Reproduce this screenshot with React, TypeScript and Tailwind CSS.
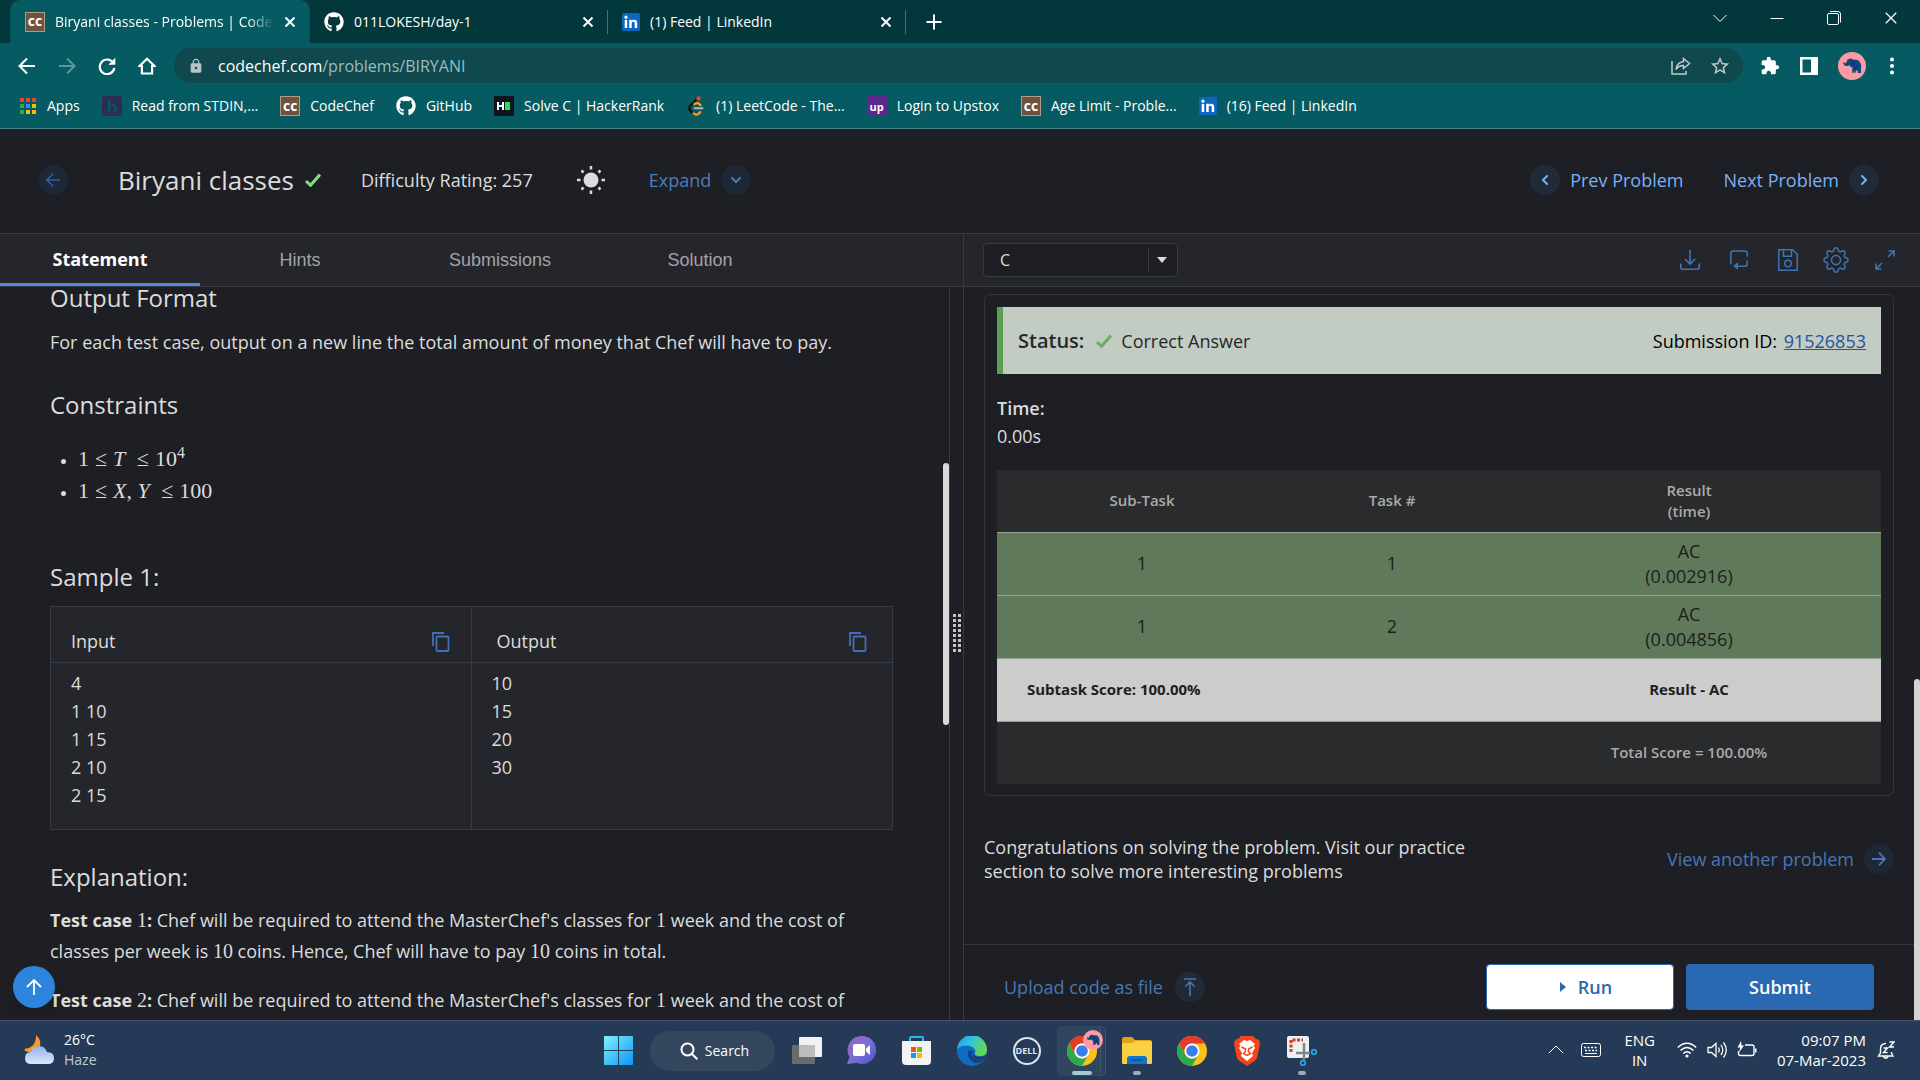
import type { ReactNode } from "react";
import { FaGithub } from "react-icons/fa";
import { MdExtension, MdLock, MdStarBorder } from "react-icons/md";

/* ---------- small drawings ---------- */

function CodeChefIcon() {
  return (
    <span className="flex size-5 shrink-0 items-center justify-center border border-[#b09a88] bg-[#6f533f] font-['Open_Sans',sans-serif] text-[11px] leading-none font-extrabold text-white">
      CC
    </span>
  );
}

function LinkedInIcon() {
  return (
    <svg viewBox="0 0 20 20" className="size-[18px] shrink-0" aria-hidden="true">
      <rect width="20" height="20" rx="2" fill="#0a66c2" />
      <rect x="3" y="7.6" width="2.8" height="9" fill="#fff" />
      <circle cx="4.4" cy="4.6" r="1.7" fill="#fff" />
      <path d="M8 7.6h2.7v1.3c.5-.9 1.5-1.5 2.8-1.5 2.7 0 3.4 1.6 3.4 4.1v5.1h-2.8v-4.6c0-1.2-.1-2.3-1.5-2.3s-1.8 1-1.8 2.2v4.7H8z" fill="#fff" />
    </svg>
  );
}

function AppsIcon() {
  const colors = ["#ea4335", "#ea4335", "#ea4335", "#34a853", "#4285f4", "#fbbc04", "#34a853", "#fbbc04", "#fbbc04"];
  return (
    <svg viewBox="0 0 18 18" className="size-[18px] shrink-0" aria-hidden="true">
      {colors.map((c, i) => (
        <rect key={i} x={1 + (i % 3) * 6} y={1 + Math.floor(i / 3) * 6} width="4" height="4" fill={c} />
      ))}
    </svg>
  );
}

function HIcon() {
  return (
    <svg viewBox="0 0 20 20" className="size-5 shrink-0" aria-hidden="true">
      <rect width="20" height="20" rx="2" fill="#2b2d55" />
      <path d="M7 3v13M7 10q1-2 3.200-2t3.100 2.600V16" fill="none" stroke="#06595f" strokeWidth="2.200" />
    </svg>
  );
}

function HackerIcon() {
  return (
    <svg viewBox="0 0 20 20" className="size-5 shrink-0" aria-hidden="true">
      <rect width="20" height="20" fill="#0b141f" />
      <path d="M4 6v8M9 6v8M4 10h5" stroke="#fff" strokeWidth="2" />
      <rect x="11" y="6" width="5" height="8" fill="#1ee35b" />
    </svg>
  );
}

function LeetIcon() {
  return (
    <svg viewBox="0 0 20 20" className="size-5 shrink-0" fill="none" strokeLinecap="round" aria-hidden="true">
      <path d="M11 3 4.500 9.500q-2.500 2.500 0 5.500l3 3" stroke="#101010" strokeWidth="2.200" />
      <path d="m7.500 17.500q2.500 2 5 .3l1.800-1.700M8.500 8.200q2.500-2 4.500-.5l1.500 1.500" stroke="#ffa116" strokeWidth="2.200" />
      <path d="M8.500 12.300h8" stroke="#b3b3b3" strokeWidth="2" />
      <circle cx="12.500" cy="2.500" r="2.200" fill="#d14a4a" />
    </svg>
  );
}

function UpstoxIcon() {
  return (
    <span className="flex size-5 shrink-0 items-center justify-center bg-[#5a298b] font-['Open_Sans',sans-serif] text-[11px] leading-none font-bold text-white">
      up
    </span>
  );
}

function Avatar({ className }: { className: string }) {
  return (
    <svg viewBox="0 0 28 28" className={className} aria-hidden="true">
      <circle cx="14" cy="14" r="14" fill="#fb9ba6" />
      <path d="M5.200 10.500q.5 4 4.300 3.500 1.300-.3 1.800-1 1 2.500 3.200 2.500l-.5 5.500h3.500l.5-2.500h1.500l.5 2.500h3v-3.500q.8-5-1.500-8-1.500-2-4.500-2l-2 .2q-1.500-1.500-3.500-1-2.500.4-3 3-1 2.800-2.300.6z" fill="#12457f" />
      <path d="M13.500 9q2.500 1 2 4M19 15l-3 2" fill="none" stroke="#0b2446" />
      <circle cx="16" cy="20.500" r="1" fill="#d98a2b" />
    </svg>
  );
}

function Cross({ className }: { className: string }) {
  return (
    <svg viewBox="0 0 12 12" className={className} fill="none" stroke="currentColor" aria-hidden="true">
      <path d="m1.500 1.500 9 9m0-9-9 9" />
    </svg>
  );
}

function Check({ className }: { className: string }) {
  return (
    <svg viewBox="0 0 16 14" className={`h-3.5 w-4 shrink-0 ${className}`} fill="none" stroke="currentColor" strokeWidth="3" aria-hidden="true">
      <path d="m1 8 4.500 4.300L15 1.500" />
    </svg>
  );
}

function Chevron({ dir, className }: { dir: "left" | "right" | "down" | "up"; className: string }) {
  const paths = {
    left: "m12 6-4 4 4 4",
    right: "m8 6 4 4-4 4",
    down: "m6 8 4 4 4-4",
    up: "m3 13 7-7 7 7",
  };
  return (
    <svg viewBox="0 0 20 20" className={className} fill="none" stroke="currentColor" strokeLinecap="round" aria-hidden="true">
      <path d={paths[dir]} />
    </svg>
  );
}

function Round({ children, tone = "bg-[#1e2735]" }: { children: ReactNode; tone?: string }) {
  return <span className={`flex size-[30px] shrink-0 items-center justify-center rounded-full ${tone}`}>{children}</span>;
}

function CopyIcon() {
  return (
    <svg viewBox="0 0 20 22" className="h-[22px] w-5" fill="none" stroke="currentColor" strokeWidth="1.800" aria-hidden="true">
      <path d="M2 15V2h11" />
      <rect x="5.500" y="5.500" width="12" height="14.500" rx="1" />
    </svg>
  );
}

function GearIcon() {
  const pts: string[] = [];
  for (let i = 0; i < 96; i++) {
    const a = (i / 96) * Math.PI * 2;
    const w = Math.cos(a * 8);
    const r = 10.6 + 1.4 * Math.max(-1, Math.min(1, w * 1.6));
    pts.push(`${(13 + r * Math.sin(a)).toFixed(2)},${(13 - r * Math.cos(a)).toFixed(2)}`);
  }
  return (
    <svg viewBox="0 0 26 26" className="size-[26px]" fill="none" stroke="currentColor" strokeWidth="1.500" strokeLinejoin="round" aria-hidden="true">
      <polygon points={pts.join(" ")} />
      <circle cx="13" cy="13" r="4.500" />
    </svg>
  );
}

/* ---------- browser ---------- */

function Tab({ icon, title, active = false }: { icon: ReactNode; title: string; active?: boolean }) {
  return (
    <div
      className={
        active
          ? "ml-[10px] flex h-[43px] w-[300px] items-center gap-[10px] rounded-t-[10px] bg-[#055b61] pr-[14px] pl-[15px] text-white"
          : "flex h-6 w-[298px] items-center gap-[10px] self-center border-r border-[#4a7375] pr-[13px] pl-[14px] text-white"
      }
    >
      {icon}
      <span
        className={
          active
            ? "min-w-0 flex-1 overflow-hidden [mask-image:linear-gradient(90deg,#000_88%,transparent)] whitespace-nowrap"
            : "min-w-0 flex-1 truncate"
        }
      >
        {title}
      </span>
      <button aria-label={`Close ${title}`}>
        <Cross className="size-3 stroke-2" />
      </button>
    </div>
  );
}

function TabStrip() {
  return (
    <div className="flex h-[43px] shrink-0 items-center bg-[#02383c]">
      <Tab active icon={<CodeChefIcon />} title="Biryani classes - Problems | CodeChef" />
      <Tab icon={<FaGithub className="size-5 shrink-0" />} title="011LOKESH/day-1" />
      <Tab icon={<LinkedInIcon />} title="(1) Feed | LinkedIn" />
      <button aria-label="New tab" className="ml-5">
        <svg viewBox="0 0 16 16" className="size-4" stroke="white" strokeWidth="2" aria-hidden="true">
          <path d="M8 .5v15M.5 8h15" />
        </svg>
      </button>
      <div className="mr-[22px] ml-auto flex items-center gap-[43px] pb-[7px] text-white">
        <button aria-label="Search tabs">
          <svg viewBox="0 0 14 14" className="size-3.5" fill="none" stroke="currentColor" aria-hidden="true">
            <path d="m.5 4 6.500 6.500L13.500 4" />
          </svg>
        </button>
        <button aria-label="Minimize">
          <svg viewBox="0 0 14 14" className="size-3.5" stroke="currentColor" aria-hidden="true">
            <path d="M.5 7.500h13" />
          </svg>
        </button>
        <button aria-label="Restore">
          <svg viewBox="0 0 14 14" className="size-3.5" fill="none" stroke="currentColor" aria-hidden="true">
            <rect x=".5" y="2.500" width="11" height="11" rx="1.500" />
            <path d="M3 .5h8a2.500 2.500 0 0 1 2.500 2.500v8.500" />
          </svg>
        </button>
        <button aria-label="Close">
          <Cross className="size-3.5 stroke-1" />
        </button>
      </div>
    </div>
  );
}

function AddressRow() {
  return (
    <div className="flex h-[45px] shrink-0 items-center pr-[22px] pl-[18px] text-white">
      <div className="flex items-center gap-[22px]">
        <button aria-label="Back">
          <svg viewBox="0 0 18 18" className="size-[18px]" fill="none" stroke="currentColor" strokeWidth="2" aria-hidden="true">
            <path d="M17 9H2m7-7.500L1.500 9 9 16.500" />
          </svg>
        </button>
        <button aria-label="Forward" className="text-[#5a979b]">
          <svg viewBox="0 0 18 18" className="size-[18px]" fill="none" stroke="currentColor" strokeWidth="2" aria-hidden="true">
            <path d="M1 9h15M9 1.500 16.500 9 9 16.500" />
          </svg>
        </button>
        <button aria-label="Reload">
          <svg viewBox="0 0 18 18" className="size-[18px]" fill="none" stroke="currentColor" strokeWidth="2.200" aria-hidden="true">
            <path d="M15 5.500A7.300 7.300 0 1 0 16.300 11" />
            <path d="M17.300.8v7h-7z" fill="currentColor" stroke="none" />
          </svg>
        </button>
        <button aria-label="Home">
          <svg viewBox="0 0 18 18" className="size-[18px]" fill="none" stroke="currentColor" strokeWidth="2.200" aria-hidden="true">
            <path d="M1.500 9 9 1.800 16.500 9h-2.400v7.500H3.900V9z" />
          </svg>
        </button>
      </div>
      <div className="ml-[18px] flex h-[35px] flex-1 items-center rounded-full bg-[#0f484d] pr-3 pl-[14px]">
        <MdLock className="size-4 text-[#b9c4c6]" />
        <a href="#url" className="ml-[14px] text-base leading-5 text-[#9dbcbe]">
          <span className="text-white">codechef.com</span>/problems/BIRYANI
        </a>
        <div className="ml-auto flex items-center gap-[18px] text-[#c3cdce]">
          <button aria-label="Share">
            <svg viewBox="0 0 20 18" className="h-[18px] w-5" fill="none" stroke="currentColor" strokeWidth="1.500" aria-hidden="true">
              <path d="M1 4v13h14v-3" />
              <path d="M12.500 1.500 18.500 6.500l-6 5V8.500Q8 8.300 5 12.500 6 5.500 12.500 4.600z" />
            </svg>
          </button>
          <button aria-label="Bookmark">
            <MdStarBorder className="size-[22px]" />
          </button>
        </div>
      </div>
      <div className="ml-[17px] flex items-center gap-5">
        <button aria-label="Extensions">
          <MdExtension className="size-5" />
        </button>
        <button aria-label="Side panel">
          <svg viewBox="0 0 18 18" className="size-[18px]" aria-hidden="true">
            <path d="M0 0h18v18H0z" fill="#fff" />
            <path d="M2.500 2.500h8.500v13H2.500z" fill="#055b61" />
          </svg>
        </button>
        <button aria-label="Profile">
          <Avatar className="size-7" />
        </button>
        <button aria-label="Menu" className="px-1">
          <svg viewBox="0 0 4 18" className="h-[18px] w-1" fill="#fff" aria-hidden="true">
            <circle cx="2" cy="2.500" r="2" />
            <circle cx="2" cy="9" r="2" />
            <circle cx="2" cy="15.500" r="2" />
          </svg>
        </button>
      </div>
    </div>
  );
}

const bookmarks: { label: string; icon: ReactNode }[] = [
  { label: "Apps", icon: <AppsIcon /> },
  { label: "Read from STDIN,...", icon: <HIcon /> },
  { label: "CodeChef", icon: <CodeChefIcon /> },
  { label: "GitHub", icon: <FaGithub className="size-5" /> },
  { label: "Solve C | HackerRank", icon: <HackerIcon /> },
  { label: "(1) LeetCode - The...", icon: <LeetIcon /> },
  { label: "Login to Upstox", icon: <UpstoxIcon /> },
  { label: "Age Limit - Proble...", icon: <CodeChefIcon /> },
  { label: "(16) Feed | LinkedIn", icon: <LinkedInIcon /> },
];

function Bookmarks() {
  return (
    <nav className="flex h-[41px] shrink-0 items-center gap-[22px] border-b border-[#4c8488] pb-1 pl-[19px] text-white">
      {bookmarks.map((b) => (
        <a key={b.label} href="#bookmark" className="flex items-center gap-[10px] whitespace-nowrap">
          {b.icon}
          {b.label}
        </a>
      ))}
    </nav>
  );
}

/* ---------- page ---------- */

function ProblemHeader() {
  return (
    <header className="flex h-[104px] shrink-0 items-center pr-[41px] pb-[2px] pl-[38px] text-lg">
      <button aria-label="Back to practice" className="text-[#2c62a8]">
        <Round>
          <svg viewBox="0 0 14 14" className="size-3.5" fill="none" stroke="currentColor" strokeWidth="1.500" aria-hidden="true">
            <path d="M14 7H1m6-6.300L.9 7 7 13.300" />
          </svg>
        </Round>
      </button>
      <h1 className="ml-[50px] text-[26px]">Biryani classes</h1>
      <Check className="ml-[11px] text-[#84dc7c]" />
      <span className="ml-10">Difficulty Rating: 257</span>
      <button aria-label="Toggle theme" className="ml-11">
        <svg viewBox="0 0 28 28" className="size-7" stroke="#dcdcdc" strokeWidth="2.500" aria-hidden="true">
          <circle cx="14" cy="14" r="7.500" fill="#dcdcdc" stroke="none" />
          <path d="M14 0v3.500M14 24.500V28M0 14h3.500M24.500 14H28M4.500 4.500 6.500 6.500M21.500 21.500l2 2M4.500 23.500l2-2M21.500 6.500l2-2" />
        </svg>
      </button>
      <button className="ml-11 flex items-center gap-[10px] text-[#4d7dba]">
        Expand
        <Round>
          <Chevron dir="down" className="size-5 stroke-2" />
        </Round>
      </button>
      <div className="ml-auto flex items-center gap-10 text-[#79b0f6]">
        <a href="#prev" className="flex items-center gap-[10px]">
          <Round tone="bg-[#202a39]">
            <Chevron dir="left" className="size-5 stroke-2" />
          </Round>
          Prev Problem
        </a>
        <a href="#next" className="flex items-center gap-[10px]">
          Next Problem
          <Round tone="bg-[#202a39]">
            <Chevron dir="right" className="size-5 stroke-2" />
          </Round>
        </a>
      </div>
    </header>
  );
}

function StatementTabs() {
  const base = "w-[200px] text-center";
  return (
    <div role="tablist" className="flex h-[54px] border-y border-[#383a42] bg-[#25262b] font-['Liberation_Sans',sans-serif] text-lg text-[#a2a3a6]">
      <button role="tab" aria-selected="true" className="w-[200px] border-b-[3px] border-[#5a86dd] text-center font-['Open_Sans',sans-serif] font-bold text-white">
        Statement
      </button>
      <button role="tab" className={base}>Hints</button>
      <button role="tab" className={base}>Submissions</button>
      <button role="tab" className={base}>Solution</button>
    </div>
  );
}

function M({ children }: { children: ReactNode }) {
  return <span className="font-['Liberation_Serif',serif] text-xl leading-none font-normal">{children}</span>;
}

function Le() {
  return <span className="mx-[6px]">≤</span>;
}

function Statement() {
  const h = "text-2xl leading-8";
  return (
    <div className="min-h-0 flex-1 overflow-hidden pr-[56px] pl-[50px]">
      <h2 className={`${h} -mt-[5px]`}>Output Format</h2>
      <p className="mt-[13px] text-lg leading-[31px]">
        For each test case, output on a new line the total amount of money that Chef will have to pay.
      </p>
      <h2 className={`${h} mt-[31px]`}>Constraints</h2>
      <ul className="mt-[22px] list-disc pl-7 font-['Liberation_Serif',serif] text-[22px] leading-8 marker:text-lg">
        <li>
          1<Le />
          <i>T</i> <Le />
          10<sup className="text-base">4</sup>
        </li>
        <li>
          1<Le />
          <i>X</i>, <i>Y</i> <Le />
          100
        </li>
      </ul>
      <h2 className={`${h} mt-[54px]`}>Sample 1:</h2>
      <div className="mt-[13px] grid grid-cols-2 border border-[#383a48] bg-[#25262b] text-lg">
        <div className="flex items-end justify-between border-r border-b border-[#383a48] px-5 pt-[18px] pb-[5px]">
          <span className="leading-8">Input</span>
          <button aria-label="Copy input" className="pb-1 text-[#3f72b4]">
            <CopyIcon />
          </button>
        </div>
        <div className="flex items-end justify-between border-b border-[#383a48] pt-[18px] pr-6 pb-[5px] pl-[25px]">
          <span className="leading-8">Output</span>
          <button aria-label="Copy output" className="pb-1 text-[#3f72b4]">
            <CopyIcon />
          </button>
        </div>
        <pre className="border-r border-[#383a48] px-5 pt-[6px] pb-5 font-['Open_Sans',sans-serif] leading-7">
          {"4\n1 10\n1 15\n2 10\n2 15"}
        </pre>
        <pre className="px-5 pt-[6px] font-['Open_Sans',sans-serif] leading-7">{"10\n15\n20\n30"}</pre>
      </div>
      <h2 className={`${h} mt-[31px]`}>Explanation:</h2>
      <p className="mt-3 text-lg leading-[31px]">
        <b>Test case <M>1</M>:</b> Chef will be required to attend the MasterChef's classes for <M>1</M> week and the cost of classes per
        week is <M>10</M> coins. Hence, Chef will have to pay <M>10</M> coins in total.
      </p>
      <p className="mt-[18px] text-lg leading-[31px]">
        <b>Test case <M>2</M>:</b> Chef will be required to attend the MasterChef's classes for <M>1</M> week and the cost of
      </p>
    </div>
  );
}

function Divider() {
  return (
    <div className="flex flex-col border-r border-[#383a42] bg-[#1e1f24]">
      <div className="h-[54px] shrink-0 border-y border-[#383a42] bg-[#25262b]" />
      <div className="flex flex-1 items-center justify-center border-l border-[#383a42]">
        <div className="grid grid-cols-2 gap-[2px] pb-[42px]">
          {Array.from({ length: 16 }, (_, i) => (
            <span key={i} className="size-[3px] bg-[#c4c4c4]" />
          ))}
        </div>
      </div>
    </div>
  );
}

function EditorToolbar() {
  return (
    <div className="flex h-[54px] shrink-0 items-center border-y border-[#383a42] bg-[#25262b] pr-6 pl-[19px]">
      <label className="relative flex h-[34px] w-[195px] items-center rounded-sm border border-[#383a42] bg-[#1e1f24]">
        <span className="sr-only">Language</span>
        <select className="h-full w-full appearance-none bg-transparent pl-4 text-base text-[#dcdcdc]" defaultValue="C">
          <option>C</option>
        </select>
        <span className="pointer-events-none absolute inset-y-1 right-0 flex w-[29px] items-center justify-center border-l border-[#383a42] pr-[2px]">
          <svg viewBox="0 0 10 6" className="h-1.5 w-2.5" fill="#dcdcdc" aria-hidden="true">
            <path d="M0 0h10L5 6z" />
          </svg>
        </span>
      </label>
      <div className="ml-auto flex items-center gap-[27px] text-[#3f74b5]">
        <button aria-label="Download">
          <svg viewBox="0 0 20 20" className="size-5" fill="none" stroke="currentColor" strokeWidth="1.600" aria-hidden="true">
            <path d="M10 0v13.500M5 9l5 5 5-5M.8 13.500v4.200q0 1.500 1.500 1.500h15.400q1.500 0 1.500-1.500v-4.200" />
          </svg>
        </button>
        <button aria-label="Reset" className="mx-[2px]">
          <svg viewBox="0 0 20 20" className="size-5" fill="none" stroke="currentColor" strokeWidth="1.500" aria-hidden="true">
            <path d="M1.800 14.500v-11Q1.800 1 4.300 1h11.400q2.500 0 2.500 2.500v10q0 2.800-2.500 2.800H7" />
            <path d="M9 12.300v7.500l-5-3.700z" fill="currentColor" stroke="none" />
            <path d="M18.200 6.500v4" stroke="#25262b" strokeWidth="2" />
          </svg>
        </button>
        <button aria-label="Save">
          <svg viewBox="0 0 20 22" className="h-[22px] w-5" fill="none" stroke="currentColor" strokeWidth="1.500" aria-hidden="true">
            <path d="M.8.8h13.700l4.700 4.500v15.900H.8z" />
            <path d="M5.500.8v6.400h8V.8" />
            <circle cx="10" cy="14.500" r="3.300" />
          </svg>
        </button>
        <button aria-label="Settings" className="-mx-[2px]">
          <GearIcon />
        </button>
        <button aria-label="Full screen">
          <svg viewBox="0 0 22 22" className="size-[22px]" fill="none" stroke="currentColor" strokeWidth="1.600" aria-hidden="true">
            <path d="M14.500 2H20v5.500M20 2l-6 6M7.500 20H2v-5.500M2 20l6-6" />
          </svg>
        </button>
      </div>
    </div>
  );
}

function Result() {
  const cell = "h-[63px] border-t border-[#97a18f] align-middle";
  return (
    <section className="mx-[20px] mt-[7px] mr-[26px] rounded-md border border-[#33353d] px-3 pt-3 pb-[11px]">
      <div className="flex h-[67px] items-center border-l-[6px] border-[#5f9c55] bg-[#c3ccc2] pr-[15px] pl-[15px] text-lg text-[#24282c]">
        <span className="text-xl font-semibold">Status:</span>
        <Check className="ml-3 text-[#6cab63]" />
        <span className="ml-[9px]">Correct Answer</span>
        <span className="ml-auto text-black">
          Submission ID:{" "}
          <a href="#submission" className="ml-[2px] text-[#24559c] underline">
            91526853
          </a>
        </span>
      </div>
      <p className="mt-5 text-lg leading-7">
        <span className="font-semibold">Time:</span>
        <br />
        0.00s
      </p>
      <table className="mt-5 w-full table-fixed border-collapse text-center text-lg leading-[25px] text-[#1b1f1b]">
        <colgroup>
          <col className="w-[290px]" />
          <col className="w-[210px]" />
          <col />
        </colgroup>
        <thead>
          <tr className="h-[62px] bg-[#2a2b2d] text-[15px] leading-[21px] text-[#aaa]">
            <th className="font-semibold">Sub-Task</th>
            <th className="font-semibold">Task #</th>
            <th className="font-semibold">
              Result
              <br />
              (time)
            </th>
          </tr>
        </thead>
        <tbody>
          <tr className="bg-[#60795b]">
            <td className={cell}>1</td>
            <td className={cell}>1</td>
            <td className={cell}>
              AC
              <br />
              (0.002916)
            </td>
          </tr>
          <tr className="bg-[#60795b]">
            <td className={cell}>1</td>
            <td className={cell}>2</td>
            <td className={cell}>
              AC
              <br />
              (0.004856)
            </td>
          </tr>
          <tr className="bg-[#ccc] text-[15px] font-bold">
            <td className={`${cell} pl-[30px] text-left`} colSpan={2}>
              Subtask Score: 100.00%
            </td>
            <td className={cell}>Result - AC</td>
          </tr>
          <tr className="bg-[#2a2b2d] text-[15px] font-semibold text-[#aaa]">
            <td className={cell} colSpan={2} />
            <td className={cell}>Total Score = 100.00%</td>
          </tr>
        </tbody>
      </table>
    </section>
  );
}

function EditorPane() {
  return (
    <div className="relative flex min-h-0 min-w-0 flex-col">
      <EditorToolbar />
      <div className="min-h-0 flex-1 overflow-hidden">
        <Result />
        <div className="mt-[39px] mr-[26px] ml-[20px] flex items-center justify-between">
          <p className="w-[500px] text-lg leading-6">
            Congratulations on solving the problem. Visit our practice section to solve more interesting problems
          </p>
          <a href="#another" className="flex items-center gap-[10px] text-lg text-[#4677b4]">
            View another problem
            <Round>
              <svg viewBox="0 0 14 14" className="size-3.5" fill="none" stroke="currentColor" strokeWidth="1.800" aria-hidden="true">
                <path d="M0 7h13M7 .7 13.100 7 7 13.300" />
              </svg>
            </Round>
          </a>
        </div>
      </div>
      <div className="flex h-[76px] shrink-0 items-center border-t border-[#33353d] pt-2 pr-[46px] pl-10">
        <button className="flex items-center gap-3 text-lg text-[#4677b4]">
          Upload code as file
          <Round tone="bg-[#222a35]">
            <svg viewBox="0 0 14 18" className="h-[18px] w-3.5" fill="none" stroke="currentColor" strokeWidth="1.600" aria-hidden="true">
              <path d="M1 1h12M7 18V4M2.500 8.500 7 4l4.500 4.500" />
            </svg>
          </Round>
        </button>
        <div className="ml-auto flex gap-3 text-lg font-semibold">
          <button className="flex h-[46px] w-[188px] items-center justify-center gap-3 rounded-sm border border-[#2a68b2] bg-white pl-3 text-[#2a68b2]">
            <svg viewBox="0 0 6 10" className="h-2.5 w-1.5" fill="currentColor" aria-hidden="true">
              <path d="M0 0v10l6-5z" />
            </svg>
            Run
          </button>
          <button className="h-[46px] w-[188px] rounded-sm bg-[#2a68b2] text-white">Submit</button>
        </div>
      </div>
      <div className="absolute right-0 bottom-0 h-[341px] w-[6px] rounded-t-full bg-[#d6d3d5]" />
    </div>
  );
}

/* ---------- taskbar ---------- */

function Chrome() {
  return (
    <svg viewBox="0 0 30 30" className="size-[30px]" aria-hidden="true">
      <circle cx="15" cy="15" r="15" fill="#fbc116" />
      <path d="M2 7.500A15 15 0 0 1 28 7.500H15A7.500 7.500 0 0 0 8.500 18.800z" fill="#e33b2e" />
      <path d="M2 7.500A15 15 0 0 0 15 30l6.500-11.200A7.500 7.500 0 0 1 8.500 18.800z" fill="#2da94f" />
      <circle cx="15" cy="15" r="7.500" fill="#fff" />
      <circle cx="15" cy="15" r="5.800" fill="#3b7ded" />
    </svg>
  );
}

function TaskIcon({ label, children, mark }: { label: string; children: ReactNode; mark?: string }) {
  return (
    <button aria-label={label} className="relative flex h-[50px] w-[55px] items-center justify-center">
      {children}
      {mark && <span className={`absolute bottom-[1px] h-1 rounded-full ${mark}`} />}
    </button>
  );
}

function Taskbar() {
  return (
    <footer className="relative flex h-[60px] shrink-0 items-center justify-between border-t border-[#47566c] bg-[#243a56] pr-[25px] pb-[2px] pl-6 font-['Open_Sans',sans-serif] text-sm text-white">
      <div className="flex items-center gap-[10px] leading-5">
        <svg viewBox="0 0 30 30" className="size-[30px]" aria-hidden="true">
          <defs>
            <linearGradient id="cloud" x1="0" y1="0" x2="0" y2="1">
              <stop offset="0" stopColor="#8fb0ec" />
              <stop offset="1" stopColor="#dfe9fb" />
            </linearGradient>
          </defs>
          <path d="M12 0q7 6 3 13-4 7-14 3-1-1 0-2.500Q12 13 12 0z" fill="#f59a23" />
          <path d="M7 29q-6 0-6-6t6-6q2-6 8-6t8 6q7 0 7 6t-6 6z" fill="url(#cloud)" />
        </svg>
        <div>
          <div>26°C</div>
          <div className="text-[#c3cbd6]">Haze</div>
        </div>
      </div>

      <div className="absolute inset-y-0 left-1/2 flex -translate-x-1/2 items-center">
        <TaskIcon label="Start">
          <svg viewBox="0 0 29 29" className="size-[29px]" aria-hidden="true">
            <defs>
              <linearGradient id="win" x1="0" y1="0" x2="1" y2="1">
                <stop offset="0" stopColor="#7df3fd" />
                <stop offset="1" stopColor="#0a95f7" />
              </linearGradient>
            </defs>
            <path d="M0 1q0-1 1-1h13v14H0zM15 0h13q1 0 1 1v13H15zM0 15h14v14H1q-1 0-1-1zM15 15h14v13q0 1-1 1H15z" fill="url(#win)" />
          </svg>
        </TaskIcon>
        <button className="mx-1 flex h-10 w-[125px] items-center justify-center gap-[7px] rounded-full bg-[#34475f] pl-1">
          <svg viewBox="0 0 18 18" className="size-[18px]" fill="none" stroke="#fff" strokeWidth="2" aria-hidden="true">
            <circle cx="7.500" cy="7.500" r="6" />
            <path d="m12 12 5.300 5.300" />
          </svg>
          Search
        </button>
        <TaskIcon label="Task view">
          <svg viewBox="0 0 30 28" className="h-7 w-[30px]" aria-hidden="true">
            <rect y="8" width="23" height="19" rx="1" fill="#6b6b6b" />
            <rect x="7" width="23" height="20" rx="1" fill="#f1f1f1" />
            <path d="M7 8h16v12H7z" fill="#bcbcbc" />
          </svg>
        </TaskIcon>
        <TaskIcon label="Chat">
          <svg viewBox="0 0 29 29" className="size-[29px]" aria-hidden="true">
            <defs>
              <linearGradient id="chat" x1="0" y1="0" x2="1" y2="1">
                <stop offset="0" stopColor="#9b62b5" />
                <stop offset="0.500" stopColor="#7b6fd8" />
                <stop offset="1" stopColor="#4b52c4" />
              </linearGradient>
            </defs>
            <path d="M15 0a14 14 0 1 1-5 27L0 28l2.500-7A14 14 0 0 1 15 0z" fill="url(#chat)" />
            <rect x="6" y="8" width="12" height="12" rx="2" fill="#fff" />
            <path d="m19 12.500 4-3.500v10l-4-3.500z" fill="#fff" />
          </svg>
        </TaskIcon>
        <TaskIcon label="Store">
          <svg viewBox="0 0 29 29" className="size-[29px]" aria-hidden="true">
            <path d="M8 6V2q0-1 1-1h11q1 0 1 1v4" fill="none" stroke="#2ab8ea" strokeWidth="2" />
            <path d="M0 5h29v20q0 4-4 4H4q-4 0-4-4z" fill="#f3f3f3" />
            <path d="M9 11h5v5H9z" fill="#f25022" />
            <path d="M15 11h5v5h-5z" fill="#7fba00" />
            <path d="M9 17h5v5H9z" fill="#00a4ef" />
            <path d="M15 17h5v5h-5z" fill="#ffb900" />
          </svg>
        </TaskIcon>
        <TaskIcon label="Edge">
          <svg viewBox="0 0 30 30" className="size-[30px]" aria-hidden="true">
            <defs>
              <linearGradient id="edge" x1="0" y1="0" x2="1" y2="0.400">
                <stop offset="0" stopColor="#1b9de2" />
                <stop offset="0.500" stopColor="#35c1e0" />
                <stop offset="1" stopColor="#62d957" />
              </linearGradient>
            </defs>
            <circle cx="15" cy="15" r="15" fill="#0e6cc4" />
            <path d="M0 14A15 15 0 0 1 30 14q0 6-7 6-6 0-5-3 1-2-.500-4-3-4-9-3.500Q2 10 0 14z" fill="url(#edge)" />
            <path d="M11 16q-1 9 8 11 6 0 9-5-5 3-10 1-5-3-2-8-4-2-5 1z" fill="#17427c" />
            <path d="M17 17q-.5 4 6 4 3 0 6-2l-1.500 4q-8 2-12-2z" fill="#243a56" />
          </svg>
        </TaskIcon>
        <TaskIcon label="Dell">
          <span className="flex size-7 items-center justify-center rounded-full border-2 border-[#dfe5ec] text-[9px] leading-none font-bold text-[#dfe5ec]">
            DELL
          </span>
        </TaskIcon>
        <TaskIcon label="Chrome, Lokesh" mark="w-5 bg-[#a3c9d3]">
          <span className="absolute inset-y-0 left-[3px] w-[49px] rounded-[5px] border border-[#40546c] bg-[#2c415b]" />
          <span className="absolute inset-y-0 left-[3px] w-[44px] rounded-[5px] border-r border-[#40546c] bg-[#30455f]" />
          <span className="relative">
            <Chrome />
            <Avatar className="absolute -top-1.5 -right-1.5 size-5" />
          </span>
        </TaskIcon>
        <TaskIcon label="File Explorer" mark="w-2 bg-[#a5a9b5]">
          <svg viewBox="0 0 30 27" className="h-[27px] w-[30px]" aria-hidden="true">
            <path d="M0 2q0-2 2-2h8l3 3h15q2 0 2 2v20H0z" fill="#e0a21a" />
            <path d="M0 6h10l3-2h15q2 0 2 2v20q0 1-1 1H1q-1 0-1-1z" fill="#fbcf42" />
            <path d="M5 27v-5q0-3 3-3h14q3 0 3 3v5z" fill="#1573c9" />
            <path d="M9 23h12" stroke="#0b4f94" strokeWidth="1.500" />
          </svg>
        </TaskIcon>
        <TaskIcon label="Chrome">
          <Chrome />
        </TaskIcon>
        <TaskIcon label="Brave">
          <svg viewBox="0 0 26 30" className="h-[30px] w-[26px]" aria-hidden="true">
            <path d="M7 0h12l2.500 2.500L25 4l1 4-2.500 12q-.5 3-3 5L13 30l-7.500-5q-2.500-2-3-5L0 8l1-4 3.500-1.500z" fill="#f4451b" />
            <path d="m13 5-3-1-5 4 1.500 2L5 12l3 5-1 3 6 5 6-5-1-3 3-5-1.500-2L21 8l-5-4z" fill="#fff" />
            <path d="m7.500 11 4 2v2.500l-2 2 3.500 2 3.500-2-2-2V13l4-2" fill="none" stroke="#f4451b" strokeWidth="1.500" />
          </svg>
        </TaskIcon>
        <TaskIcon label="Snipping Tool" mark="w-2 bg-[#a5a9b5]">
          <svg viewBox="0 0 30 30" className="size-[30px]" aria-hidden="true">
            <rect width="22" height="22" rx="2" fill="#eef0f2" />
            <path d="M4 16V4h12" fill="none" stroke="#c8441c" strokeWidth="3" strokeDasharray="3 1.500" />
            <path d="M17 7v17M9 17h14" stroke="#7d8691" strokeWidth="2.500" />
            <circle cx="16" cy="27" r="2.300" fill="none" stroke="#27a3e2" strokeWidth="1.800" />
            <circle cx="27" cy="16" r="2.300" fill="none" stroke="#27a3e2" strokeWidth="1.800" />
          </svg>
        </TaskIcon>
      </div>

      <div className="flex items-center text-[15px] leading-5">
        <Chevron dir="up" className="size-5 stroke-1" />
        <svg viewBox="0 0 20 14" className="ml-[15px] h-3.5 w-5" fill="none" stroke="#fff" aria-hidden="true">
          <rect x=".5" y=".5" width="19" height="13" rx="2" />
          <path d="M3 4.500h14M4 7.500h12" strokeDasharray="2 1.500" strokeWidth="1.500" />
          <path d="M4 10.500h12" />
        </svg>
        <div className="ml-[23px] text-center">
          ENG
          <br />
          IN
        </div>
        <svg viewBox="0 0 20 16" className="ml-[22px] h-4 w-5" fill="none" stroke="#fff" strokeWidth="1.500" aria-hidden="true">
          <path d="M.8 5.500q9.200-8.500 18.400 0M3.500 8.500q6.500-6 13 0M6.200 11.500q3.800-3.500 7.600 0" />
          <circle cx="10" cy="14" r="1.600" fill="#fff" stroke="none" />
        </svg>
        <svg viewBox="0 0 20 18" className="ml-[10px] h-[18px] w-5" fill="none" stroke="#fff" strokeWidth="1.300" aria-hidden="true">
          <path d="M1 6.500h3.500L9 2.500v13l-4.500-4H1zM11.500 6.500q1.500 2.500 0 5M14 4q3.500 5 0 10M16.500 1.500q5.500 7.500 0 15" />
        </svg>
        <svg viewBox="0 0 20 18" className="ml-[10px] h-[18px] w-5" fill="none" stroke="#fff" strokeWidth="1.400" aria-hidden="true">
          <path d="M8 4h7q2 0 2 2v6.500q0 2-2 2H3.500q-2 0-2-2V10" />
          <path d="M18 7.500h1.500v4H18zM4 0 .5 6.500h2.700L2 11.500l5-7H4.500z" fill="#fff" stroke="none" />
        </svg>
        <div className="ml-5 text-right whitespace-nowrap">
          09:07 PM
          <br />
          07-Mar-2023
        </div>
        <svg viewBox="0 0 18 20" className="ml-[11px] h-5 w-[18px]" fill="none" stroke="#fff" strokeWidth="1.400" aria-hidden="true">
          <path d="M9 3.500q-5.500 0-5.500 5.500v4L1.500 16h14.500l-1.500-3v-1M6.500 16.500q2.300 3.500 4.600 0" />
          <path d="M6.500 8h4l-4 4.500h4M12.500 2H17l-4.500 5H17" />
        </svg>
      </div>
    </footer>
  );
}

export default function App() {
  return (
    <div className="flex h-screen w-full flex-col overflow-hidden bg-[#1e1f24] font-['Open_Sans',sans-serif] text-[#dcdcdc]">
      <div className="bg-[#055b61] text-sm">
        <TabStrip />
        <AddressRow />
        <Bookmarks />
      </div>
      <ProblemHeader />
      <main className="grid min-h-0 flex-1 grid-cols-[949fr_15px_956fr] grid-rows-[minmax(0,1fr)]">
        <div className="relative flex min-h-0 min-w-0 flex-col">
          <StatementTabs />
          <Statement />
          <div className="absolute top-[230px] right-0 h-[262px] w-[6px] rounded-full bg-[#d9d9d9]" />
          <button
            aria-label="Scroll to top"
            className="absolute bottom-3 left-[13px] flex size-[42px] items-center justify-center rounded-full bg-[#2d84dc] shadow-lg"
          >
            <svg viewBox="0 0 16 16" className="size-4" fill="none" stroke="#fff" strokeWidth="1.800" aria-hidden="true">
              <path d="M8 16V1.500M1 8l7-7 7 7" />
            </svg>
          </button>
        </div>
        <Divider />
        <EditorPane />
      </main>
      <Taskbar />
    </div>
  );
}
